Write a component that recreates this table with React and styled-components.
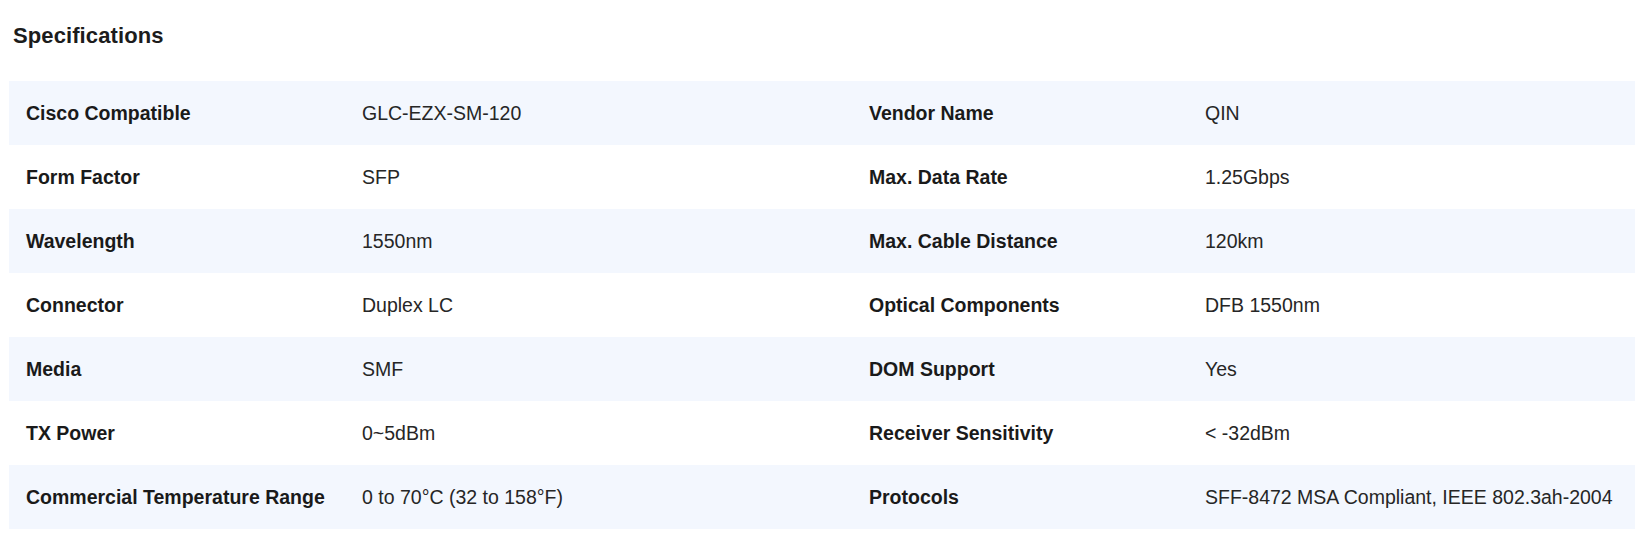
import React from "react";
import styled, { createGlobalStyle } from "styled-components";

const Global = createGlobalStyle`
  html, body { margin: 0; padding: 0; background: #ffffff; }
  body { font-family: "Liberation Sans", Arial, sans-serif; color: #1f1f1f; }
`;

const Section = styled.section`
  padding: 0 0 0 9px;
`;

const Title = styled.h2`
  margin: 0;
  padding: 24px 0 0 4px;
  height: 81px;
  box-sizing: border-box;
  font-size: 22px;
  line-height: 24px;
  font-weight: 700;
  letter-spacing: 0.1px;
  color: #1c1c1c;
`;

const Table = styled.div`
  display: grid;
  grid-template-columns: 337px 506px 336px 1fr;
`;

const Row = styled.div`
  display: contents;
  & > * {
    background: ${(p) => (p.$shaded ? "#f3f7fe" : "#ffffff")};
  }
`;

const Cell = styled.div`
  height: 64px;
  display: flex;
  align-items: center;
  padding-left: ${(p) => (p.$first ? "17px" : "16px")};
  font-size: 19.5px;
  white-space: nowrap;
`;

const Label = styled(Cell)`
  font-weight: 700;
  color: #1a1a1a;
`;

const Value = styled(Cell)`
  font-weight: 400;
  color: #262626;
`;

const rows = [
  ["Cisco Compatible", "GLC-EZX-SM-120", "Vendor Name", "QIN"],
  ["Form Factor", "SFP", "Max. Data Rate", "1.25Gbps"],
  ["Wavelength", "1550nm", "Max. Cable Distance", "120km"],
  ["Connector", "Duplex LC", "Optical Components", "DFB 1550nm"],
  ["Media", "SMF", "DOM Support", "Yes"],
  ["TX Power", "0~5dBm", "Receiver Sensitivity", "< -32dBm"],
  [
    "Commercial Temperature Range",
    "0 to 70°C (32 to 158°F)",
    "Protocols",
    "SFF-8472 MSA Compliant, IEEE 802.3ah-2004",
  ],
];

export default function App() {
  return (
    <>
      <Global />
      <Section>
        <Title>Specifications</Title>
        <Table>
          {rows.map((r, i) => (
            <Row key={i} $shaded={i % 2 === 0}>
              <Label $first>{r[0]}</Label>
              <Value>{r[1]}</Value>
              <Label $first>{r[2]}</Label>
              <Value $first>{r[3]}</Value>
            </Row>
          ))}
        </Table>
      </Section>
    </>
  );
}
